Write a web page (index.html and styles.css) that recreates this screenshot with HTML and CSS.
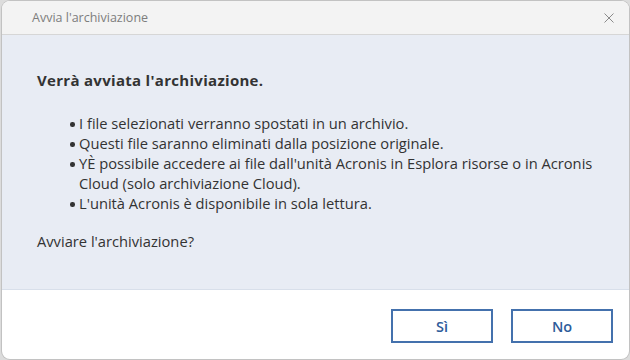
FILE: index.html
```html
<!DOCTYPE html>
<html lang="it">
<head>
<meta charset="utf-8">
<title>Avvia l'archiviazione</title>
<link rel="stylesheet" href="styles.css">
</head>
<body>
<div class="window">
  <div class="titlebar">
    <span class="title">Avvia l'archiviazione</span>
    <svg class="close" width="10" height="10" viewBox="0 0 10 10"><path d="M0.5 0.5 L9.5 9.5 M9.5 0.5 L0.5 9.5" stroke="#8a8a8a" stroke-width="1" fill="none"/></svg>
  </div>
  <div class="content">
    <div class="heading">Verrà avviata l'archiviazione.</div>
    <ul class="points">
      <li>I file selezionati verranno spostati in un archivio.</li>
      <li>Questi file saranno eliminati dalla posizione originale.</li>
      <li>YÈ possibile accedere ai file dall'unità Acronis in Esplora risorse o in Acronis Cloud (solo archiviazione Cloud).</li>
      <li>L'unità Acronis è disponibile in sola lettura.</li>
    </ul>
    <div class="question">Avviare l'archiviazione?</div>
  </div>
  <div class="footer">
    <button class="btn">Sì</button>
    <button class="btn">No</button>
  </div>
</div>
</body>
</html>
```
FILE: styles.css
```css
html, body {
  margin: 0;
  padding: 0;
}
body {
  background: #dcdcdc;
  width: 630px;
  height: 360px;
  overflow: hidden;
  font-family: "Segoe UI", "Open Sans", "Noto Sans", sans-serif;
}
.window {
  margin: 1px 1px 1px 2px;
  height: 358px;
  box-sizing: border-box;
  border-radius: 8px;
  overflow: hidden;
  display: flex;
  flex-direction: column;
  box-shadow: 0 0 0 1px #c2c2c2;
  background: #fff;
}
.titlebar {
  height: 33px;
  flex: none;
  background: #f3f3f3;
  border-bottom: 1px solid #d6d6d6;
  display: flex;
  align-items: center;
  justify-content: space-between;
  padding: 0 15px 0 30px;
}
.title {
  font-size: 12.5px;
  color: #7d7d7d;
}
.close {
  display: block;
  margin-top: 1px;
}
.content {
  flex: 1;
  background: #e8ecf4;
  border-bottom: 1px solid #d8dfea;
  padding: 35px 35px 0 35px;
  color: #333;
  font-size: 14.7px;
  line-height: 20px;
}
.heading {
  font-weight: 700;
  font-size: 15px;
  letter-spacing: 0.3px;
}
.points {
  list-style: none;
  margin: 23px 0 0 0;
  padding: 0 0 0 42px;
  width: 522px;
}
.points li {
  position: relative;
}
.points li::before {
  content: "";
  position: absolute;
  left: -9px;
  top: 9px;
  width: 4.5px;
  height: 4.5px;
  border-radius: 50%;
  background: #333;
}
.question {
  margin-top: 18px;
}
.footer {
  height: 69px;
  flex: none;
  display: flex;
  justify-content: flex-end;
  align-items: flex-start;
  gap: 18px;
  padding: 19px 16px 0 0;
  box-sizing: border-box;
}
.btn {
  width: 102px;
  height: 34px;
  background: #fff;
  border: 2px solid #4471ad;
  color: #2e5c9a;
  font-family: "Segoe UI", "Open Sans", "Noto Sans", sans-serif;
  font-size: 14.5px;
  font-weight: 600;
  padding: 0;
}
```
